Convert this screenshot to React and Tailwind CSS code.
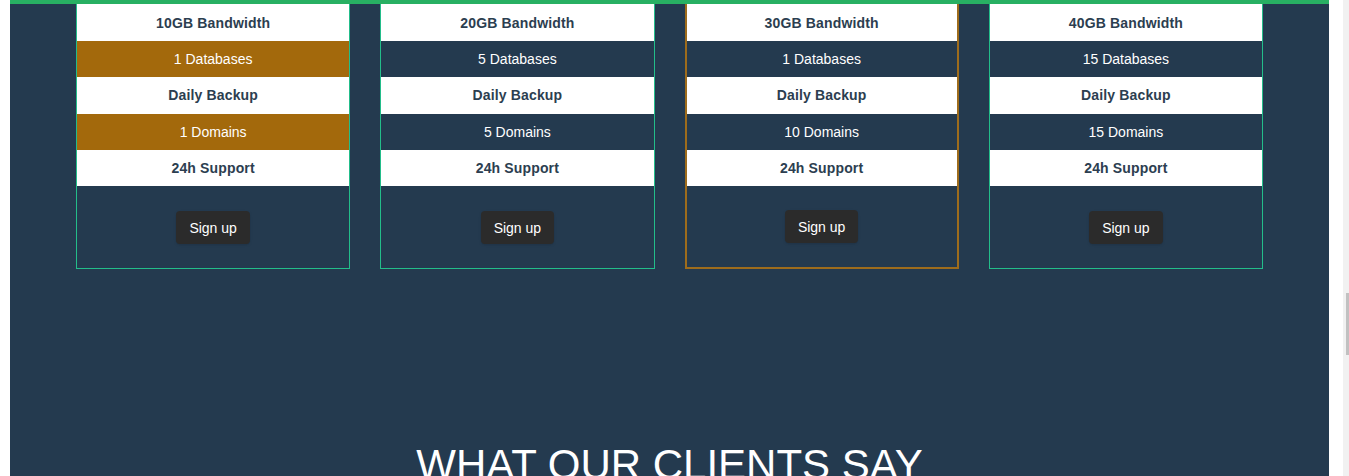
import React from 'react';

const plans = [
  { bw: '10GB', db: 1, domains: 1, stripe: 'bg-[#a3690c]', border: 'border border-t-0 border-[#23bd8a]', footer: 'pt-[25px] pb-[24px]' },
  { bw: '20GB', db: 5, domains: 5, stripe: 'bg-[#243a4f]', border: 'border border-t-0 border-[#23bd8a]', footer: 'pt-[25px] pb-[24px]' },
  { bw: '30GB', db: 1, domains: 10, stripe: 'bg-[#243a4f]', border: 'border-2 border-t-0 border-[#9e6c1c]', footer: 'pt-[24px] pb-[24px]' },
  { bw: '40GB', db: 15, domains: 15, stripe: 'bg-[#243a4f]', border: 'border border-t-0 border-[#23bd8a]', footer: 'pt-[25px] pb-[24px]' },
];

function LightRow({ children, first }) {
  return (
    <div className={`${first ? 'h-[37px]' : 'h-[36.25px]'} bg-white flex items-center justify-center text-sm font-bold tracking-[0.15px] text-[#2c3e50]`}>
      {children}
    </div>
  );
}

function DarkRow({ children, stripe }) {
  return (
    <div className={`h-[36.25px] ${stripe} flex items-center justify-center text-sm text-white`}>
      {children}
    </div>
  );
}

export default function App() {
  return (
    <div className="flex h-[476px] overflow-hidden bg-white font-['Liberation_Sans',Arial,sans-serif]">
      <div className="flex-1 pl-[10px] pr-[14px]">
        <div className="h-full bg-[#243a4f]">
          <div className="h-1 bg-[#28b063]" />

          {/* Pricing cards */}
          <div className="grid grid-cols-4 items-start gap-[30px] px-[66px]">
            {plans.map((plan) => (
              <div key={plan.bw} className={plan.border}>
                <LightRow first>{plan.bw} Bandwidth</LightRow>
                <DarkRow stripe={plan.stripe}>{plan.db} Databases</DarkRow>
                <LightRow>Daily Backup</LightRow>
                <DarkRow stripe={plan.stripe}>{plan.domains} Domains</DarkRow>
                <LightRow>24h Support</LightRow>
                <div className={`flex justify-center ${plan.footer}`}>
                  <button className="h-[33px] px-[13px] rounded-[4px] bg-[#2b2b2b] text-sm text-white shadow-sm">
                    Sign up
                  </button>
                </div>
              </div>
            ))}
          </div>

          <h2 className="mt-[175px] text-center text-[42px] leading-none font-normal text-white">
            WHAT OUR CLIENTS SAY
          </h2>
        </div>
      </div>

      {/* scrollbar */}
      <div className="w-[6px] bg-[#f1f1f1] pt-[293px]">
        <div className="ml-auto w-[3px] h-[62px] bg-[#c1c1c1]" />
      </div>
    </div>
  );
}
